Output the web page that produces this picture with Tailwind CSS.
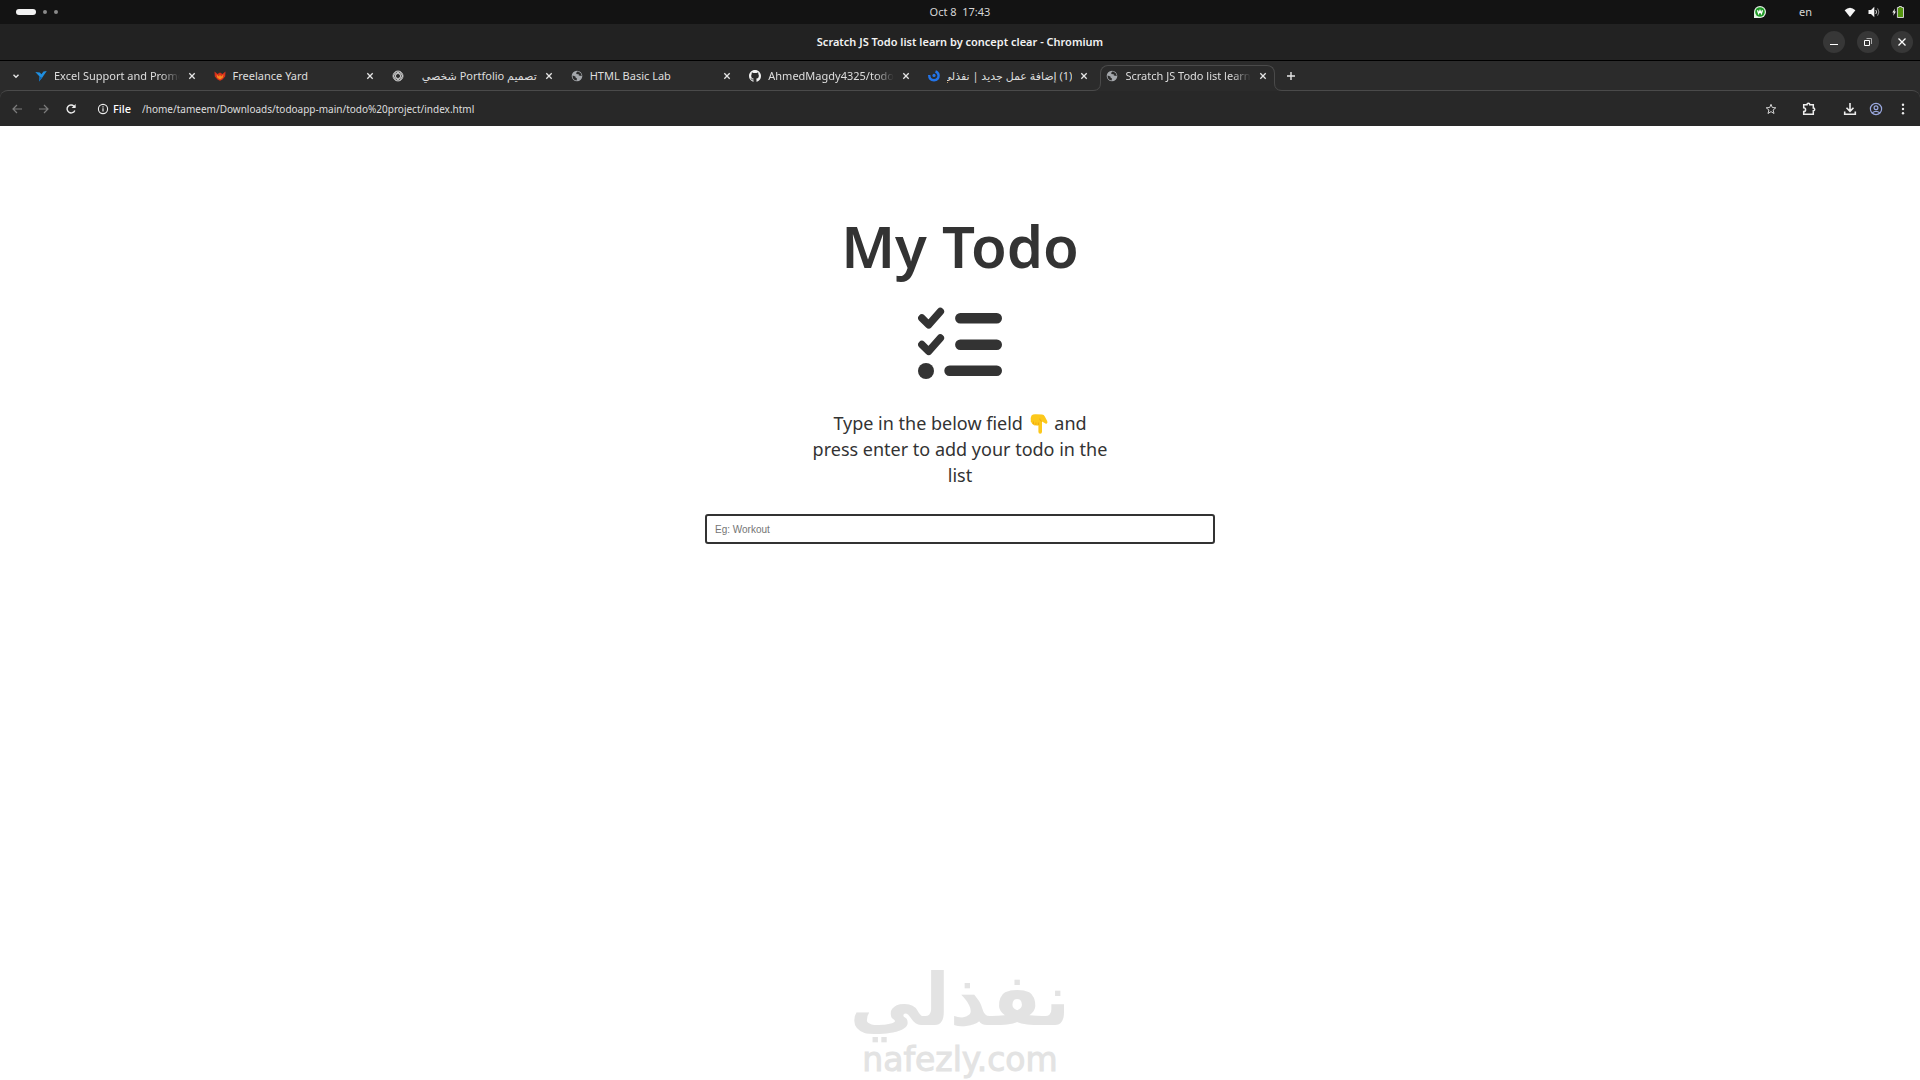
<!DOCTYPE html>
<html lang="en">
  <head>
    <meta charset="UTF-8" />
    <meta name="viewport" content="width=device-width, initial-scale=1.0" />
    <title>Scratch JS Todo list learn by concept clear</title>
    <script src="https://cdn.jsdelivr.net/npm/@tailwindcss/browser@4"></script>
  </head>
  <body class="flex min-h-screen flex-col bg-white font-['Noto_Sans','DejaVu_Sans',sans-serif]">
    <!-- desktop panel -->
    <header class="grid h-6 grid-cols-3 items-center bg-[#131313] px-4 text-[11px] leading-4 text-[#d6d6d6]">
      <div class="flex items-center gap-[7px]">
        <span class="h-1.5 w-5 rounded-full bg-[#f2f2f2]"></span>
        <span class="size-1 rounded-full bg-[#8a8a8a]"></span>
        <span class="size-1 rounded-full bg-[#8a8a8a]"></span>
      </div>
      <time class="text-center whitespace-pre">Oct 8  17:43</time>
      <div class="flex items-center justify-end">
        <svg class="size-3.5" viewBox="0 0 14 14">
          <path d="M1 13V7a6 6 0 1 1 6 6z" fill="#e8f3e8" />
          <circle cx="7" cy="7" r="4.8" fill="#1f9a26" />
          <path d="M4.5 5.2l1.1 3.4L7 5.6l1.4 3 1.1-3.4" fill="none" stroke="#fff" stroke-width="1.3" />
        </svg>
        <span class="ml-8">en</span>
        <svg class="ml-8 size-3" viewBox="0 0 12 12">
          <path d="M6 11L.6 4.2Q6-.8 11.4 4.2z" fill="#f5f5f5" />
        </svg>
        <svg class="ml-3 size-3" viewBox="0 0 12 12" fill="none">
          <path d="M.5 4H3l3.3-3.2v10.4L3 8H.5z" fill="#f5f5f5" />
          <path d="M7.8 4q1.5 2 0 4" stroke="#ddd" />
          <path d="M9.6 2.4q2.6 3.6 0 7.2" stroke="#999" />
        </svg>
        <svg class="ml-3 size-3" viewBox="0 0 12 12">
          <path d="M3 2.5L.3 6.5h1.5L1.2 9.8 4 5.6H2.5z" fill="#f5f5f5" />
          <path d="M7 1.5V.5h2.6v1h1.9v10H5.4v-10z" fill="#55960f" stroke="#cfcfcf" />
        </svg>
      </div>
    </header>

    <!-- window title -->
    <div class="grid h-[37px] grid-cols-[1fr_auto_1fr] items-center border-b border-black bg-[#222222] px-[7px]">
      <span></span>
      <h2 class="text-[11px] leading-4 font-semibold text-[#f2f2f2]">Scratch JS Todo list learn by concept clear - Chromium</h2>
      <div class="flex justify-end gap-3">
        <button aria-label="Minimize" class="size-[22px] rounded-full bg-[#373737]">
          <svg class="size-[22px]" viewBox="0 0 22 22"><path d="M7 13.5h8" stroke="#fff" /></svg>
        </button>
        <button aria-label="Restore" class="size-[22px] rounded-full bg-[#373737]">
          <svg class="size-[22px]" viewBox="0 0 22 22" fill="none">
            <path d="M7.5 9.5h5v5h-5z" stroke="#fff" />
            <path d="M9.5 7.5h5V13" stroke="#aaa" />
          </svg>
        </button>
        <button aria-label="Close" class="size-[22px] rounded-full bg-[#373737]">
          <svg class="size-[22px]" viewBox="0 0 22 22"><path d="M7.5 7.5l7 7m0-7l-7 7" stroke="#fff" stroke-width="1.3" /></svg>
        </button>
      </div>
    </div>

    <svg class="hidden">
      <symbol id="close" viewBox="0 0 8 8"><path d="M1.3 1.3l5.4 5.4m0-5.4L1.3 6.7" stroke="#e6e6e6" stroke-width="1.3" /></symbol>
      <symbol id="globe" viewBox="0 0 12 12">
        <circle cx="6" cy="6" r="5.3" fill="#a4a7ab" />
        <path d="M6.2 1.6L5 3.2l1 1.1 1.5-.2.3 1.4L10.8 6a5 5 0 0 0-3-4.3zM1.6 5.4l2.8 1.2.3 1.2L6 8.6l-.4 2A5 5 0 0 1 1.6 5.4z" fill="#2b2b2b" />
      </symbol>
    </svg>

    <!-- tabs -->
    <div class="flex h-[29px] items-stretch bg-[#2b2b2b] text-[11px] leading-[18px] text-[#dedede]">
      <button aria-label="Search tabs" class="flex w-[29px] items-center justify-center pl-0.5">
        <svg class="size-2" viewBox="0 0 8 8" fill="none"><path d="M1.5 2.7L4 5.2l2.5-2.5" stroke="#e6e6e6" stroke-width="1.4" /></svg>
      </button>
      <nav class="grid w-[1250px] grid-cols-7 pt-1">
        <div class="flex items-center pr-3 pb-1 pl-1.5">
          <svg class="size-3 shrink-0" viewBox="0 0 12 12">
            <path d="M.3 2l4.5.5 1.6 1.8L8.5 1.5 11.800 1 9 5 7.200 7.700 4 11.500l.5-5z" fill="#1f8fe0" />
            <path d="M4.5 6.5l2.7 1.2L4 11.5z" fill="#1468b0" />
          </svg>
          <a href="#" class="ml-[7px] flex-1 overflow-hidden whitespace-nowrap mask-r-from-85%">Excel Support and Promo</a>
          <button aria-label="Close tab" class="ml-2 flex"><svg class="size-2"><use href="#close" /></svg></button>
        </div>
        <div class="flex items-center pr-3 pb-1 pl-1.5">
          <svg class="size-3 shrink-0" viewBox="0 0 12 12">
            <path d="M.5 1.500L3.500 4 6 2.500 8.500 4l3-2.500-.3 5L8.500 9.500 6 10.800 3.500 9.500.8 6.500z" fill="#d8301c" />
            <path d="M2.5 4.500L5 6.500l1-2 1 2 2.500-2-.8 3.200L6 9.500 3.300 7.700z" fill="#f58a1f" />
          </svg>
          <a href="#" class="ml-[7px] flex-1 overflow-hidden whitespace-nowrap">Freelance Yard</a>
          <button aria-label="Close tab" class="ml-2 flex"><svg class="size-2"><use href="#close" /></svg></button>
        </div>
        <div class="flex items-center pr-3 pb-1 pl-1.5">
          <svg class="size-3 shrink-0" viewBox="0 0 12 12" fill="none" stroke="#c9c9c9" stroke-width=".9">
            <circle cx="6" cy="6" r="5" />
            <ellipse cx="6" cy="6" rx="4.6" ry="2.4" />
            <ellipse cx="6" cy="6" rx="4.6" ry="2.4" transform="rotate(60 6 6)" />
            <ellipse cx="6" cy="6" rx="4.6" ry="2.4" transform="rotate(120 6 6)" />
          </svg>
          <a href="#" dir="rtl" class="ml-[7px] flex-1 overflow-hidden whitespace-nowrap">تصميم Portfolio شخصي</a>
          <button aria-label="Close tab" class="ml-2 flex"><svg class="size-2"><use href="#close" /></svg></button>
        </div>
        <div class="flex items-center pr-3 pb-1 pl-1.5">
          <svg class="size-3 shrink-0"><use href="#globe" /></svg>
          <a href="#" class="ml-[7px] flex-1 overflow-hidden whitespace-nowrap">HTML Basic Lab</a>
          <button aria-label="Close tab" class="ml-2 flex"><svg class="size-2"><use href="#close" /></svg></button>
        </div>
        <div class="flex items-center pr-3 pb-1 pl-1.5">
          <svg class="size-3 shrink-0" viewBox="0 0 16 16" fill="#f2f2f2">
            <path d="M8 0C3.58 0 0 3.58 0 8c0 3.54 2.29 6.53 5.47 7.59.4.07.55-.17.55-.38 0-.19-.01-.82-.01-1.49-2.01.37-2.53-.49-2.69-.94-.09-.23-.48-.94-.82-1.13-.28-.15-.68-.52-.01-.53.63-.01 1.08.58 1.23.82.72 1.21 1.87.87 2.33.66.07-.52.28-.87.51-1.07-1.78-.2-3.64-.89-3.64-3.95 0-.87.31-1.59.82-2.15-.08-.2-.36-1.02.08-2.12 0 0 .67-.21 2.2.82.64-.18 1.32-.27 2-.27s1.36.09 2 .27c1.53-1.04 2.2-.82 2.2-.82.44 1.1.16 1.92.08 2.12.51.56.82 1.27.82 2.15 0 3.07-1.87 3.75-3.65 3.95.29.25.54.73.54 1.48 0 1.07-.01 1.93-.01 2.2 0 .21.15.46.55.38A8 8 0 0 0 16 8c0-4.42-3.58-8-8-8z" />
          </svg>
          <a href="#" class="ml-[7px] flex-1 overflow-hidden whitespace-nowrap mask-r-from-85%">AhmedMagdy4325/todo</a>
          <button aria-label="Close tab" class="ml-2 flex"><svg class="size-2"><use href="#close" /></svg></button>
        </div>
        <div class="flex items-center pr-3 pb-1 pl-1.5">
          <svg class="size-3 shrink-0" viewBox="0 0 12 12" fill="none">
            <path d="M1.2 5q0 5 4.800 5.200Q10.600 10 10.600 5.500 10.400 2.500 7.500 1.500" stroke="#2374e8" stroke-width="2.4" />
            <circle cx="6" cy="5.4" r="1.6" fill="#2374e8" />
          </svg>
          <a href="#" dir="rtl" class="ml-[7px] flex-1 overflow-hidden whitespace-nowrap">(1) إضافة عمل جديد | نفذلي</a>
          <button aria-label="Close tab" class="ml-2 flex"><svg class="size-2"><use href="#close" /></svg></button>
        </div>
        <div class="relative z-10 mr-1 -mb-px flex items-center rounded-t-lg border-x border-t border-[#4a4a4a] bg-[#2b2b2b] pr-[7px] pb-1.5 pl-[5px]">
          <svg class="absolute bottom-0 -left-2 size-2" viewBox="0 0 8 8"><path d="M0 7.5Q7.5 7.5 7.5 0H8v8H0z" fill="#2b2b2b" /><path d="M0 7.5Q7.5 7.5 7.5 0" fill="none" stroke="#4a4a4a" /></svg>
          <svg class="absolute -right-2 bottom-0 size-2" viewBox="0 0 8 8"><path d="M8 7.5Q.5 7.5.5 0H0v8h8z" fill="#2b2b2b" /><path d="M8 7.5Q.5 7.5.5 0" fill="none" stroke="#4a4a4a" /></svg>
          <svg class="size-3 shrink-0"><use href="#globe" /></svg>
          <a href="#" class="ml-[7px] flex-1 overflow-hidden whitespace-nowrap mask-r-from-85%">Scratch JS Todo list learn by</a>
          <button aria-label="Close tab" class="ml-2 flex"><svg class="size-2"><use href="#close" /></svg></button>
        </div>
      </nav>
      <button aria-label="New tab" class="ml-2 flex items-center">
        <svg class="size-2" viewBox="0 0 8 8"><path d="M4 0v8M0 4h8" stroke="#e6e6e6" stroke-width="1.4" /></svg>
      </button>
    </div>

    <!-- toolbar -->
    <div class="bg-[#2b2b2b]">
      <div class="flex h-9 items-center rounded-t-lg border-t border-[#4a4a4a] bg-[#282828] px-[11px] text-[11px] leading-4 text-[#dedede]">
        <button aria-label="Back"><svg class="size-3" viewBox="0 0 12 12" fill="none"><path d="M11 6H2m4-4L2 6l4 4" stroke="#7c7c7c" stroke-width="1.2" /></svg></button>
        <button aria-label="Forward" class="ml-[15px]"><svg class="size-3" viewBox="0 0 12 12" fill="none"><path d="M1 6h9M6 2l4 4-4 4" stroke="#7c7c7c" stroke-width="1.2" /></svg></button>
        <button aria-label="Reload" class="ml-[15px]">
          <svg class="size-3" viewBox="0 0 12 12" fill="none"><path d="M9.8 7.4A4 4 0 1 1 9 3.2L10 4.2" stroke="#ededed" stroke-width="1.4" /><path d="M10.6 1v4H6.6z" fill="#ededed" /></svg>
        </button>
        <button class="ml-5 flex items-center gap-1 font-medium text-white">
          <svg class="size-3" viewBox="0 0 12 12" fill="none"><circle cx="6" cy="6" r="4.6" stroke="#ededed" stroke-width="1.1" /><path d="M6 5.3v3.2M6 3.3v1.1" stroke="#ededed" stroke-width="1.2" /></svg>
          File
        </button>
        <input aria-label="Address" value="/home/tameem/Downloads/todoapp-main/todo%20project/index.html" class="ml-[11px] min-w-0 flex-1 bg-transparent text-[10px] outline-none" />
        <button aria-label="Bookmark"><svg class="size-3" viewBox="0 0 12 12" fill="none"><path d="M6 1.3l1.3 3.2 3.5.3-2.7 2.2.9 3.5-3-1.9-3 1.9.9-3.5L1.2 4.8l3.5-.3z" stroke="#d2d2d2" /></svg></button>
        <button aria-label="Extensions" class="ml-[25px]">
          <svg class="size-3.5" viewBox="0 0 14 14" fill="none"><path d="M1.7 2.7H5a1.4 1.4 0 0 1 2.8 0h3.5V6a1.4 1.4 0 0 1 0 2.8v3.5H1.7V9.6a1.9 1.9 0 0 0 0-3.8z" stroke="#ededed" stroke-width="1.5" /></svg>
        </button>
        <button aria-label="Downloads" class="ml-[27px]">
          <svg class="size-3.5" viewBox="0 0 14 14" fill="none"><path d="M7 1v8M3.5 5.8L7 9.3l3.5-3.5M1.7 9.5v2.8h10.6V9.5" stroke="#ededed" stroke-width="1.6" /></svg>
        </button>
        <button aria-label="Profile" class="ml-3">
          <svg class="size-3.5" viewBox="0 0 14 14" fill="none" stroke="#9aa8df" stroke-width="1.2"><circle cx="7" cy="7" r="5.6" /><circle cx="7" cy="5.8" r="1.9" /><path d="M3.3 10.8q3.7-2.8 7.4 0" /></svg>
        </button>
        <button aria-label="Menu" class="ml-3.5">
          <svg class="size-3" viewBox="0 0 12 12" fill="#ededed"><circle cx="6" cy="1.7" r="1.2" /><circle cx="6" cy="6" r="1.2" /><circle cx="6" cy="10.3" r="1.2" /></svg>
        </button>
      </div>
    </div>

    <!-- todo page -->
    <main class="flex flex-1 flex-col items-center pt-20 text-[#333333]">
      <h1 class="text-[58px] leading-[80px] font-semibold">My Todo</h1>
      <svg class="mt-[21px] h-[72px] w-[84px]" viewBox="0 0 84 72" fill="none" stroke="#333333" stroke-linecap="round" stroke-linejoin="round">
        <path d="M3.8 11l6.9 6.8L22.4 4.5M3.8 37.5l6.9 6.8L22.4 31" stroke-width="7.4" />
        <path d="M42.3 11.2h36.5M42.3 37.7h36.5M31.5 63.7h47.3" stroke-width="10.4" />
        <circle cx="8" cy="64" r="8" fill="#333333" stroke="none" />
      </svg>
      <label for="todo" class="mt-[31px] w-[296px] text-center text-[18px] leading-[26px]">
        Type in the below field
        <svg role="img" aria-label="down" class="mx-0.5 inline-block h-5 w-[18px] align-[-4px]" viewBox="0 0 18 20">
          <path d="M1.5 1.5Q3 0 6 .3L12 .5q2 .2 2.8 2l2.4 4.6q.8 2-.7 2.6-1 .3-1.9-.7L12 7.5v10.3q0 1.900-1.800 1.900t-1.800-1.900v-6.600q-1.300.9-2.500 0-1.500.7-2.500-.7Q1.700 10.300 1.700 8.800.3 8 .8 6.500q-.4-3 .7-5z" fill="#fcc81b" />
          <path d="M8.4 11.2V8.6M5.9 11V8.5M3.5 10.4V7.5M12 7.5q-2.5-.8-2.2-3" fill="none" stroke="#eda60c" stroke-width=".8" />
        </svg>
        and press enter to add your todo in the list
      </label>
      <input id="todo" type="text" placeholder="Eg: Workout" class="mt-[26px] h-[30px] w-[510px] rounded-[3px] border-2 border-[#333333] px-2 font-['Liberation_Sans',sans-serif] text-[10px] outline-none placeholder:text-[#757575]" />
      <footer class="mt-auto flex flex-col items-center gap-1 text-[#e3e3e3]">
        <p dir="rtl" lang="ar" class="font-['DejaVu_Sans',sans-serif] text-[72px] leading-[72px] font-bold">نفذلي</p>
        <p class="font-['DejaVu_Sans',sans-serif] text-[33px] leading-10 [-webkit-text-stroke:1px_#e3e3e3]">nafezly.com</p>
      </footer>
    </main>
  </body>
</html>
